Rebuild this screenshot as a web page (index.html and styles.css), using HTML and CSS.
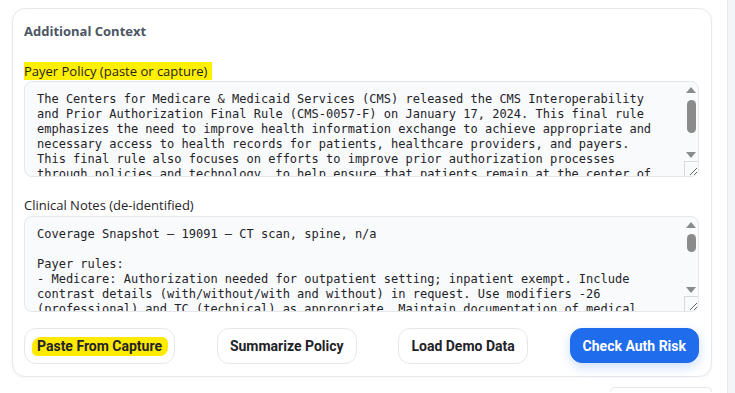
FILE: index.html
```html
<!DOCTYPE html>
<html lang="en">
<head>
  <meta charset="UTF-8" />
  <title>Additional Context</title>
  <link rel="stylesheet" href="styles.css">
</head>
<body>
  <div class="page">
    <div class="main-col">
      <div class="context-card">
        <h3>Additional Context</h3>

        <label class="field-label"><span class="hl">Payer Policy (paste or capture)</span></label>
        <div class="input-wrapper">
          <textarea id="payer_policy" class="field-text" spellcheck="false">The Centers for Medicare &amp; Medicaid Services (CMS) released the CMS Interoperability and Prior Authorization Final Rule (CMS-0057-F) on January 17, 2024. This final rule emphasizes the need to improve health information exchange to achieve appropriate and necessary access to health records for patients, healthcare providers, and payers. This final rule also focuses on efforts to improve prior authorization processes through policies and technology, to help ensure that patients remain at the center of their own care. Impacted payers must implement a Prior Authorization API and send decisions within 72 hours for expedited requests.</textarea>
          <div class="scroll-bar">
            <span class="arrow-up"></span>
            <span class="thumb thumb-policy"></span>
            <span class="arrow-down"></span>
          </div>
          <span class="corner"></span>
        </div>

        <label class="field-label second">Clinical Notes (de-identified)</label>
        <div class="input-wrapper">
          <textarea id="clinical_notes" class="field-text" spellcheck="false">Coverage Snapshot — 19091 — CT scan, spine, n/a

Payer rules:
- Medicare: Authorization needed for outpatient setting; inpatient exempt. Include
contrast details (with/without/with and without) in request. Use modifiers -26
(professional) and TC (technical) as appropriate. Maintain documentation of medical
necessity in the chart.
- Medicaid: Prior authorization required for all settings. Submit clinical notes
and prior imaging results.
- Commercial: Authorization required unless ordered from the emergency department.

Clinical summary:
Patient reports low back pain radiating to the left leg for 8 weeks. Conservative
therapy (NSAIDs, physical therapy x 6 weeks) completed without relief. Neurological
exam shows decreased reflexes at the left ankle. MRI contraindicated due to
implanted device.

Requested: CT lumbar spine without contrast.
Ordering provider: Orthopedics.
Place of service: Outpatient imaging center.</textarea>
          <div class="scroll-bar">
            <span class="arrow-up"></span>
            <span class="thumb thumb-notes"></span>
            <span class="arrow-down"></span>
          </div>
          <span class="corner"></span>
        </div>

        <div class="actions">
          <button class="btn"><span class="marker">Paste From Capture</span></button>
          <button class="btn">Summarize Policy</button>
          <button class="btn">Load Demo Data</button>
          <button class="btn btn-primary">Check Auth Risk</button>
        </div>
      </div>
      <div class="next-row">
        <div class="next-box"></div>
      </div>
    </div>
    <div class="side-strip"></div>
  </div>
</body>
</html>
```

FILE: styles.css
```css
html, body {
  margin: 0;
  height: 100%;
  overflow: hidden;
  background-color: #ffffff;
  font-family: 'Open Sans', 'Noto Sans', sans-serif;
}
.page {
  display: flex;
  height: 100%;
}
.main-col {
  flex: 1;
  padding: 8px 15px 0 12px;
}
.side-strip {
  width: 7px;
  background-color: #f4f5f7;
  border-left: 1px solid #e6e8eb;
}
.context-card {
  border: 1px solid #e6e8ec;
  border-radius: 13px;
  padding: 12px 12px 12px 11px;
  box-shadow: 0 1px 3px rgba(15, 23, 42, 0.04);
  background-color: #fff;
}
.context-card h3 {
  margin: 0 0 22px 0;
  font-size: 13px;
  line-height: 20px;
  font-weight: 700;
  color: #4b5563;
}
.field-label {
  display: block;
  font-size: 13px;
  line-height: 16px;
  color: #1f2328;
  margin-bottom: 2px;
}
.field-label.second {
  margin-top: 20px;
  margin-bottom: 3px;
}
.hl {
  background-color: #ffef00;
  padding: 0 5px 0 0;
}
.input-wrapper {
  position: relative;
}
.field-text {
  display: block;
  width: 100%;
  height: 96px;
  box-sizing: border-box;
  padding: 10px 42px 10px 12px;
  border: 1px solid #e5e7eb;
  border-radius: 8px;
  background-color: #f8fafc;
  color: #1f2328;
  font-family: 'DejaVu Sans Mono', monospace;
  font-size: 12px;
  line-height: 15px;
  outline: none;
  overflow: hidden;
}
.scroll-bar {
  position: absolute;
  top: 4px;
  right: 2px;
  bottom: 17px;
  width: 12px;
  display: flex;
  flex-direction: column;
  align-items: center;
  pointer-events: none;
}
.arrow-up,
.arrow-down {
  width: 0;
  height: 0;
  border-left: 5px solid transparent;
  border-right: 5px solid transparent;
  margin: 2px 0;
}
.arrow-up {
  border-bottom: 6px solid #8b8b8b;
}
.arrow-down {
  border-top: 6px solid #8b8b8b;
  margin-top: auto;
}
.thumb {
  width: 9px;
  border-radius: 5px;
  background-color: #8b8b8b;
}
.thumb-policy {
  height: 33px;
  margin-top: 5px;
}
.thumb-notes {
  height: 18px;
  margin-top: 4px;
}
.corner {
  position: absolute;
  right: 1px;
  bottom: 1px;
  width: 13px;
  height: 14px;
  border-left: 1px solid #d6d9de;
  border-top: 1px solid #d6d9de;
  pointer-events: none;
}
.actions {
  display: flex;
  justify-content: space-between;
  margin-top: 16px;
}
.btn {
  height: 36px;
  padding: 0 12px;
  background-color: #fff;
  border: 1px solid #e5e7eb;
  border-radius: 12px;
  font-family: Roboto, sans-serif;
  font-size: 14px;
  font-weight: 700;
  color: #1f2328;
  cursor: pointer;
}
.marker {
  background-color: #ffea00;
  padding: 1px 6px 2px 5px;
  margin: 0 -6px 0 -5px;
  border-radius: 9px 6px 8px 5px;
}
.btn-primary {
  background-color: #1f6cec;
  border-color: #1f6cec;
  color: #fff;
  height: 35px;
  box-shadow: 0 4px 12px rgba(31, 108, 236, 0.22);
}
.next-row {
  display: flex;
  justify-content: flex-end;
  margin-top: 10px;
}
.next-box {
  width: 100px;
  height: 4px;
  border: 1px solid #e5e7eb;
  border-bottom: none;
  border-radius: 10px 10px 0 0;
}
```
